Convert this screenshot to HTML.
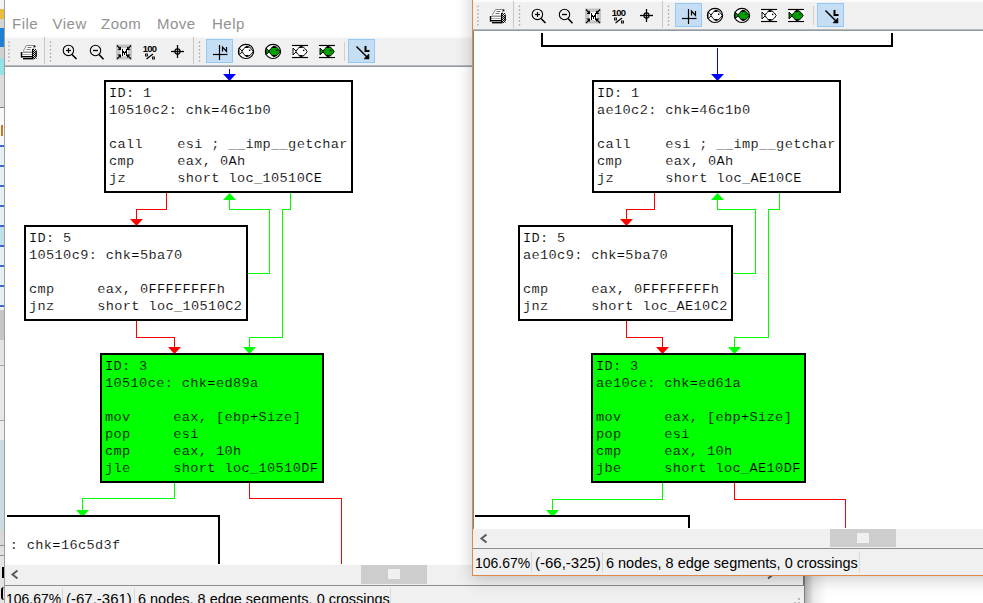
<!DOCTYPE html>
<html><head><meta charset="utf-8"><style>
*{margin:0;padding:0;box-sizing:border-box}
html,body{width:983px;height:603px;overflow:hidden;background:#fff}
body{position:relative}
.abs{position:absolute}
.node{position:absolute;border:2px solid #000;overflow:hidden}
.txt{position:absolute;font-family:"Liberation Mono", monospace;font-size:13.6px;letter-spacing:0.372px;line-height:17px;color:#000;white-space:pre}
.ln{height:17px}
.menu{position:absolute;font-family:"Liberation Sans", sans-serif;font-size:15px;letter-spacing:0.5px;color:#929292;top:15px;line-height:17px}
.stat{position:absolute;font-family:"Liberation Sans", sans-serif;font-size:15px;color:#000;white-space:nowrap;line-height:17px}
.canvas{position:absolute;overflow:hidden;background:#fff}
svg{position:absolute;left:0;top:0;overflow:visible}
</style></head><body>

<div class="abs" style="left:0;top:0px;width:4px;height:9px;background:#f4f4f4"></div>
<div class="abs" style="left:0;top:9px;width:4px;height:10px;background:#e6be3c"></div>
<div class="abs" style="left:0;top:19px;width:4px;height:9px;background:#d4d4d4"></div>
<div class="abs" style="left:0;top:28px;width:4px;height:19px;background:#1f7fd2"></div>
<div class="abs" style="left:0;top:47px;width:4px;height:11px;background:#d0d0d0"></div>
<div class="abs" style="left:0;top:58px;width:4px;height:17px;background:#92e2e8"></div>
<div class="abs" style="left:0;top:75px;width:4px;height:32px;background:#dcdcdc"></div>
<div class="abs" style="left:0;top:107px;width:4px;height:1px;background:#808080"></div>
<div class="abs" style="left:0;top:108px;width:4px;height:37px;background:#f8f8f8"></div>
<div class="abs" style="left:0;top:145px;width:4px;height:2px;background:#3a6ad0"></div>
<div class="abs" style="left:0;top:147px;width:4px;height:18px;background:#e4f0f2"></div>
<div class="abs" style="left:0;top:165px;width:4px;height:2px;background:#3a6ad0"></div>
<div class="abs" style="left:0;top:167px;width:4px;height:18px;background:#e4f0f2"></div>
<div class="abs" style="left:0;top:185px;width:4px;height:2px;background:#3a6ad0"></div>
<div class="abs" style="left:0;top:187px;width:4px;height:18px;background:#e4f0f2"></div>
<div class="abs" style="left:0;top:205px;width:4px;height:2px;background:#3a6ad0"></div>
<div class="abs" style="left:0;top:207px;width:4px;height:18px;background:#e4f0f2"></div>
<div class="abs" style="left:0;top:225px;width:4px;height:2px;background:#3a6ad0"></div>
<div class="abs" style="left:0;top:227px;width:4px;height:18px;background:#bfe0ea"></div>
<div class="abs" style="left:0;top:245px;width:4px;height:2px;background:#3a6ad0"></div>
<div class="abs" style="left:0;top:247px;width:4px;height:18px;background:#e4f0f2"></div>
<div class="abs" style="left:0;top:265px;width:4px;height:2px;background:#3a6ad0"></div>
<div class="abs" style="left:0;top:267px;width:4px;height:18px;background:#e4f0f2"></div>
<div class="abs" style="left:0;top:285px;width:4px;height:2px;background:#3a6ad0"></div>
<div class="abs" style="left:0;top:287px;width:4px;height:18px;background:#e4f0f2"></div>
<div class="abs" style="left:0;top:305px;width:4px;height:2px;background:#3a6ad0"></div>
<div class="abs" style="left:0;top:307px;width:4px;height:18px;background:#e4f0f2"></div>
<div class="abs" style="left:0;top:310px;width:4px;height:30px;background:#c6c6c6"></div>
<div class="abs" style="left:0;top:340px;width:4px;height:25px;background:#e4e4e4"></div>
<div class="abs" style="left:0;top:365px;width:4px;height:1px;background:#a8a8a8"></div>
<div class="abs" style="left:0;top:366px;width:4px;height:54px;background:#e8e8e8"></div>
<div class="abs" style="left:0;top:420px;width:4px;height:1px;background:#a8a8a8"></div>
<div class="abs" style="left:0;top:421px;width:4px;height:19px;background:#ececec"></div>
<div class="abs" style="left:0;top:440px;width:4px;height:90px;background:#c8dce2"></div>
<div class="abs" style="left:0;top:530px;width:4px;height:15px;background:#d8d8d8"></div>
<div class="abs" style="left:0;top:545px;width:4px;height:1px;background:#909090"></div>
<div class="abs" style="left:0;top:546px;width:4px;height:9px;background:#e0e0e0"></div>
<div class="abs" style="left:0;top:555px;width:4px;height:1px;background:#909090"></div>
<div class="abs" style="left:0;top:556px;width:4px;height:47px;background:#e4e4e4"></div>
<div class="abs" style="left:0;top:125px;width:3px;height:11px;border-right:2px solid #c87820"></div>
<div class="abs" style="left:0;top:567px;width:4px;height:11px;border-right:2px solid #000"></div>
<div class="abs" style="left:1px;top:587px;width:3px;height:13px;border-left:2px solid #000;border-radius:3px 0 0 3px"></div>
<div class="abs" style="left:805px;top:576px;width:22px;height:27px;background:linear-gradient(to right, rgba(0,0,0,0.3), rgba(0,0,0,0.08) 40%, rgba(0,0,0,0))"></div>
<div class="abs" style="left:4px;top:0;width:801px;height:603px;background:#fff;border-left:1px solid #a0a0a0;border-right:1px solid #7a7e84"></div>
<div class="menu" style="left:12px">File</div>
<div class="menu" style="left:52.5px">View</div>
<div class="menu" style="left:101px">Zoom</div>
<div class="menu" style="left:157px">Move</div>
<div class="menu" style="left:212px">Help</div>
<div class="abs" style="left:5px;top:36px;width:799px;height:29px;background:#f0f0f0;border-top:2px solid #fbfbfb"></div>
<div class="abs" style="left:5px;top:65px;width:799px;height:2px;background:linear-gradient(#c4c8cc,#868c94)"></div>
<svg width="983" height="603" style="left:0;top:0"><defs><pattern id="dith" width="2" height="2" patternUnits="userSpaceOnUse"><rect width="1" height="1" fill="#000"/><rect x="1" y="1" width="1" height="1" fill="#000"/></pattern></defs><g transform="translate(0,0)">
 <path d="M26.5 45.5 L34.5 45.5 L32 51.5 L23 51.5 Z" fill="#fff" stroke="#888" stroke-width="1"/>
 <line x1="27.5" y1="47.5" x2="31.5" y2="47.5" stroke="#777" stroke-width="1"/>
 <line x1="26.5" y1="49.5" x2="30.5" y2="49.5" stroke="#777" stroke-width="1"/>
 <rect x="33.8" y="45.6" width="1.6" height="1.6" fill="#000"/>
 <rect x="21" y="51.5" width="12" height="6" fill="#fff"/>
 <line x1="21" y1="52.5" x2="33" y2="52.5" stroke="#999" stroke-width="1"/>
 <line x1="22" y1="54.5" x2="33" y2="54.5" stroke="#aaa" stroke-width="1"/>
 <rect x="20.8" y="52" width="1.4" height="5.5" fill="#000"/>
 <rect x="21" y="56" width="12" height="1.4" fill="#000"/>
 <rect x="23" y="58" width="10.5" height="1.4" fill="#000"/>
 <rect x="32" y="49" width="4.5" height="10" fill="url(#dith)"/>
 <rect x="32" y="49" width="1.2" height="10" fill="#000"/>
 <rect x="35.6" y="51" width="1.2" height="6" fill="#000"/>
 <circle cx="68.4" cy="50.4" r="5.2" fill="none" stroke="#000" stroke-width="1.1"/>
 <line x1="66" y1="50.5" x2="71" y2="50.5" stroke="#000" stroke-width="1.2"/>
 <line x1="68.5" y1="48" x2="68.5" y2="53" stroke="#000" stroke-width="1.2"/>
 <line x1="72" y1="54.5" x2="76.5" y2="59" stroke="#000" stroke-width="1.6"/>
 <circle cx="95.5" cy="50.5" r="5.2" fill="none" stroke="#000" stroke-width="1.1"/>
 <line x1="93" y1="50.5" x2="98" y2="50.5" stroke="#000" stroke-width="1.3"/>
 <line x1="99" y1="54.5" x2="103.5" y2="59.2" stroke="#000" stroke-width="1.6"/>
 <rect x="116" y="44.5" width="16" height="15" fill="#c4c4c4"/>
 <rect x="120.5" y="48.3" width="7.5" height="8" fill="#fff"/>
 <path d="M117 45.5 L120 48.5 M131 45.5 L128 48.5 M117 59 L120 56 M131 59 L128 56" stroke="#000" stroke-width="1.2"/>
 <path d="M117.5 50 L121 50 L121 46.5 Z M130.5 50 L127 50 L127 46.5 Z M117.5 54.5 L121 54.5 L121 58 Z M130.5 54.5 L127 54.5 L127 58 Z" fill="#000"/>
 <path d="M122.5 55.5 L122.5 50.5 L124.5 53.5 L126.5 50.5 L126.5 55.5" fill="none" stroke="#000" stroke-width="1.15" shape-rendering="crispEdges"/>
 <text x="149.5" y="51.8" font-family="Liberation Sans" font-size="9.2" font-weight="bold" text-anchor="middle" fill="#000" letter-spacing="-0.7" textLength="13.5" lengthAdjust="spacingAndGlyphs">100</text>
 <line x1="146.5" y1="59" x2="153" y2="54" stroke="#000" stroke-width="1.2"/>
 <rect x="145.5" y="54" width="2" height="2" fill="none" stroke="#000" stroke-width="0.9"/>
 <rect x="152.5" y="57" width="2" height="2" fill="none" stroke="#000" stroke-width="0.9"/>
 <line x1="171" y1="51.5" x2="184" y2="51.5" stroke="#000" stroke-width="1.3"/>
 <line x1="177.5" y1="45" x2="177.5" y2="58" stroke="#000" stroke-width="1.3"/>
 <circle cx="177.5" cy="51.5" r="2.6" fill="none" stroke="#000" stroke-width="1.1"/>
 <rect x="206.5" y="39.5" width="26" height="23" fill="#c6def3" stroke="#93c9f5" stroke-width="1"/>
 <line x1="219.5" y1="45" x2="219.5" y2="60" stroke="#000" stroke-width="1.2"/>
 <line x1="213" y1="54.5" x2="227.5" y2="54.5" stroke="#000" stroke-width="1.2"/>
 <path d="M222.5 51.5 L222.5 47 L226.5 51.5 L226.5 47" fill="none" stroke="#000" stroke-width="1.2"/>

 <ellipse cx="246" cy="51.4" rx="7.6" ry="7.1" fill="#fff" stroke="#000" stroke-width="1.2"/>
 <path d="M239 47.9 L242.5 51.4 L239 54.9 Z" fill="#fff" stroke="#000" stroke-width="1"/><path d="M242 51.4 Q245 45.4 249 46.8 L251.5 48.9 L253.2 51.4 L251.5 53.9 L249 56.0 Q245 57.4 242 51.4 Z" fill="#fff" stroke="#000" stroke-width="1"/><path d="M244.5 47.9 L246.8 45.6 L249 47.9 Z M244.5 54.9 L246.8 57.199999999999996 L249 54.9 Z" fill="#000"/><rect x="249" y="49.6" width="1.4" height="1.4" fill="#000"/>
 <ellipse cx="273" cy="51.4" rx="7.6" ry="7.1" fill="#fff" stroke="#000" stroke-width="1.2"/>
 <path d="M266 47.9 L269.5 51.4 L266 54.9 Z" fill="#00a000" stroke="#000" stroke-width="1"/><path d="M269 51.4 Q272 45.4 276 46.8 L278.5 48.9 L280.2 51.4 L278.5 53.9 L276 56.0 Q272 57.4 269 51.4 Z" fill="#00a000" stroke="#000" stroke-width="1"/><path d="M271.5 47.9 L273.8 45.6 L276 47.9 Z M271.5 54.9 L273.8 57.199999999999996 L276 54.9 Z" fill="#000"/><rect x="276" y="49.6" width="1.4" height="1.4" fill="#000"/>
 <rect x="292" y="45" width="16" height="13" fill="#fff"/>
 <line x1="292" y1="45.5" x2="308" y2="45.5" stroke="#000" stroke-width="1.2"/>
 <line x1="292" y1="57.5" x2="308" y2="57.5" stroke="#000" stroke-width="1.2"/>
 <path d="M293 48.0 L296.5 51.5 L293 55.0 Z" fill="#fff" stroke="#000" stroke-width="1"/><path d="M296 51.5 Q299 45.5 303 46.9 L305.5 49.0 L307.2 51.5 L305.5 54.0 L303 56.1 Q299 57.5 296 51.5 Z" fill="#fff" stroke="#000" stroke-width="1"/><path d="M298.5 48.0 L300.8 45.7 L303 48.0 Z M298.5 55.0 L300.8 57.3 L303 55.0 Z" fill="#000"/><rect x="303" y="49.7" width="1.4" height="1.4" fill="#000"/>
 <rect x="319" y="45" width="16" height="13" fill="#fff"/>
 <line x1="319" y1="45.5" x2="335" y2="45.5" stroke="#000" stroke-width="1.2"/>
 <line x1="319" y1="57.5" x2="335" y2="57.5" stroke="#000" stroke-width="1.2"/>
 <path d="M320 48.0 L323.5 51.5 L320 55.0 Z" fill="#00a000" stroke="#000" stroke-width="1"/><path d="M323 51.5 Q326 45.5 330 46.9 L332.5 49.0 L334.2 51.5 L332.5 54.0 L330 56.1 Q326 57.5 323 51.5 Z" fill="#00a000" stroke="#000" stroke-width="1"/><path d="M325.5 48.0 L327.8 45.7 L330 48.0 Z M325.5 55.0 L327.8 57.3 L330 55.0 Z" fill="#000"/><rect x="330" y="49.7" width="1.4" height="1.4" fill="#000"/>
 <line x1="344.5" y1="42" x2="344.5" y2="61" stroke="#d0d0d0" stroke-width="1"/>
 <rect x="348.5" y="39.5" width="26" height="23" fill="#c6def3" stroke="#93c9f5" stroke-width="1"/>
 <line x1="356.5" y1="46.5" x2="367" y2="57" stroke="#000" stroke-width="1.5"/>
 <path d="M369 59 L364 58.8 L368.8 54 Z" fill="#000" stroke="#000" stroke-width="0.6"/>
 <path d="M365.5 46 L365.5 51 L369.5 51" fill="none" stroke="#000" stroke-width="2"/>
<line x1="8.4" y1="42.9" x2="9.6" y2="41.7" stroke="#a0a0a0" stroke-width="1.1"/><line x1="8.4" y1="46.6" x2="9.6" y2="45.400000000000006" stroke="#a0a0a0" stroke-width="1.1"/><line x1="8.4" y1="50.3" x2="9.6" y2="49.1" stroke="#a0a0a0" stroke-width="1.1"/><line x1="8.4" y1="54.0" x2="9.6" y2="52.800000000000004" stroke="#a0a0a0" stroke-width="1.1"/><line x1="8.4" y1="57.699999999999996" x2="9.6" y2="56.5" stroke="#a0a0a0" stroke-width="1.1"/><line x1="8.4" y1="61.4" x2="9.6" y2="60.2" stroke="#a0a0a0" stroke-width="1.1"/><line x1="49.9" y1="42.9" x2="51.1" y2="41.7" stroke="#a0a0a0" stroke-width="1.1"/><line x1="49.9" y1="46.6" x2="51.1" y2="45.400000000000006" stroke="#a0a0a0" stroke-width="1.1"/><line x1="49.9" y1="50.3" x2="51.1" y2="49.1" stroke="#a0a0a0" stroke-width="1.1"/><line x1="49.9" y1="54.0" x2="51.1" y2="52.800000000000004" stroke="#a0a0a0" stroke-width="1.1"/><line x1="49.9" y1="57.699999999999996" x2="51.1" y2="56.5" stroke="#a0a0a0" stroke-width="1.1"/><line x1="49.9" y1="61.4" x2="51.1" y2="60.2" stroke="#a0a0a0" stroke-width="1.1"/><line x1="198.9" y1="42.9" x2="200.1" y2="41.7" stroke="#a0a0a0" stroke-width="1.1"/><line x1="198.9" y1="46.6" x2="200.1" y2="45.400000000000006" stroke="#a0a0a0" stroke-width="1.1"/><line x1="198.9" y1="50.3" x2="200.1" y2="49.1" stroke="#a0a0a0" stroke-width="1.1"/><line x1="198.9" y1="54.0" x2="200.1" y2="52.800000000000004" stroke="#a0a0a0" stroke-width="1.1"/><line x1="198.9" y1="57.699999999999996" x2="200.1" y2="56.5" stroke="#a0a0a0" stroke-width="1.1"/><line x1="198.9" y1="61.4" x2="200.1" y2="60.2" stroke="#a0a0a0" stroke-width="1.1"/><line x1="44.5" y1="37" x2="44.5" y2="64" stroke="#c8c8c8" stroke-width="1"/><line x1="193.5" y1="37" x2="193.5" y2="64" stroke="#c8c8c8" stroke-width="1"/></g></svg>
<div class="canvas" style="left:7px;top:69px;width:465px;height:495px">
<div class="abs" style="left:-7px;top:-69px;width:983px;height:603px">
<svg width="983" height="603"><polyline points="229.5,60 229.5,75" fill="none" stroke="#0000ff" stroke-width="1" shape-rendering="crispEdges"/><path d="M223.0 74 L236.0 74 L229.5 81 Z" fill="#0000ff"/><polyline points="166.5,193 166.5,209.5 136.5,209.5 136.5,219" fill="none" stroke="#ff0000" stroke-width="1" shape-rendering="crispEdges"/><path d="M130.0 219 L143.0 219 L136.5 226 Z" fill="#ff0000"/><polyline points="247,273.5 269.5,273.5 269.5,209.5 229.5,209.5 229.5,199" fill="none" stroke="#00ff00" stroke-width="1" shape-rendering="crispEdges"/><path d="M223.0 200 L236.0 200 L229.5 193 Z" fill="#00ff00"/><polyline points="290.5,193 290.5,209.5 282.5,209.5 282.5,337.5 249.5,337.5 249.5,347" fill="none" stroke="#00ff00" stroke-width="1" shape-rendering="crispEdges"/><path d="M243.0 347 L256.0 347 L249.5 354 Z" fill="#00ff00"/><polyline points="136.5,321 136.5,337.5 174.5,337.5 174.5,347" fill="none" stroke="#ff0000" stroke-width="1" shape-rendering="crispEdges"/><path d="M168.0 347 L181.0 347 L174.5 354 Z" fill="#ff0000"/><polyline points="174.5,483 174.5,498.5 82.5,498.5 82.5,510" fill="none" stroke="#00ff00" stroke-width="1" shape-rendering="crispEdges"/><path d="M76.0 510 L89.0 510 L82.5 517 Z" fill="#00ff00"/><polyline points="249.5,483 249.5,498.5 341.5,498.5 341.5,600" fill="none" stroke="#ff0000" stroke-width="1" shape-rendering="crispEdges"/></svg>
<div class="node" style="left:104px;top:80px;width:249px;height:113px;background:#fff"><div class="txt" style="left:3px;top:3px;-webkit-text-stroke:0.15px #fff"><div class="ln">ID: 1</div><div class="ln">10510c2: chk=46c1b0</div><div class="ln">&#160;</div><div class="ln">call    esi ; __imp__getchar</div><div class="ln">cmp     eax, 0Ah</div><div class="ln">jz      short loc_10510CE</div></div></div>
<div class="node" style="left:24px;top:225px;width:224px;height:96px;background:#fff"><div class="txt" style="left:3px;top:3px;-webkit-text-stroke:0.15px #fff"><div class="ln">ID: 5</div><div class="ln">10510c9: chk=5ba70</div><div class="ln">&#160;</div><div class="ln">cmp     eax, 0FFFFFFFFh</div><div class="ln">jnz     short loc_10510C2</div></div></div>
<div class="node" style="left:100px;top:353px;width:224px;height:130px;background:#00ff00"><div class="txt" style="left:3px;top:3px;-webkit-text-stroke:0.15px #00ff00"><div class="ln">ID: 3</div><div class="ln">10510ce: chk=ed89a</div><div class="ln">&#160;</div><div class="ln">mov     eax, [ebp+Size]</div><div class="ln">pop     esi</div><div class="ln">cmp     eax, 10h</div><div class="ln">jle     short loc_10510DF</div></div></div>
<div class="node" style="left:-55px;top:515px;width:275px;height:120px;background:#fff"><div class="txt" style="left:3px;top:3px;-webkit-text-stroke:0.15px #fff"><div class="ln">&#160;</div><div class="ln">       : chk=16c5d3f</div></div></div>
</div></div>
<div class="abs" style="left:5px;top:565px;width:799px;height:20px;background:#f0f0f0"></div>
<svg width="983" height="603"><path d="M17.5 570.5 L12.5 574.5 L17.5 578.5" fill="none" stroke="#5a5a5a" stroke-width="2"/><path d="M768 570.5 L773 574.5 L768 578.5" fill="none" stroke="#5a5a5a" stroke-width="2"/></svg>
<div class="abs" style="left:361px;top:565px;width:66px;height:19px;background:#cdcdcd"></div>
<div class="abs" style="left:388px;top:569px;width:12px;height:10px;background:#f0f0f0"></div>
<div class="abs" style="left:5px;top:585px;width:799px;height:1px;background:#8a8e94"></div>
<div class="abs" style="left:5px;top:586px;width:799px;height:17px;background:#f0f0f0"></div>
<div class="stat" style="left:5.5px;top:590px;transform:scaleX(0.93);transform-origin:0 0">106.67%</div>
<div class="stat" style="left:66px;top:590px;transform:scaleX(1.0);transform-origin:0 0">(-67,-361)</div>
<div class="stat" style="left:137.5px;top:590px;transform:scaleX(0.965);transform-origin:0 0">6 nodes, 8 edge segments, 0 crossings</div>
<div class="abs" style="left:803px;top:576px;width:1px;height:9px;background:#70747a"></div>
<div class="abs" style="left:798px;top:598px;width:2px;height:2px;background:#b8b8b8"></div>
<div class="abs" style="left:798px;top:602px;width:2px;height:2px;background:#b8b8b8"></div>
<div class="abs" style="left:794px;top:602px;width:2px;height:2px;background:#b8b8b8"></div>
<div class="abs" style="left:62px;top:588px;width:1px;height:20px;background:#dadada"></div>
<div class="abs" style="left:134px;top:588px;width:1px;height:20px;background:#dadada"></div>
<div class="abs" style="left:390px;top:588px;width:1px;height:20px;background:#dadada"></div>
<div class="abs" style="left:472px;top:-20px;width:540px;height:596px;background:#f0f0f0;border-left:1px solid #e08a4a;border-bottom:1px solid #e08a4a;box-shadow:0 3px 16px rgba(0,0,0,0.22)"></div>
<div class="abs" style="left:473px;top:0;width:510px;height:29px;background:#f0f0f0;border-top:2px solid #fbfbfb"></div>
<div class="abs" style="left:473px;top:29px;width:510px;height:2px;background:linear-gradient(#c4c8cc,#868c94)"></div>
<svg width="983" height="603"><g transform="translate(469,-36)">
 <path d="M26.5 45.5 L34.5 45.5 L32 51.5 L23 51.5 Z" fill="#fff" stroke="#888" stroke-width="1"/>
 <line x1="27.5" y1="47.5" x2="31.5" y2="47.5" stroke="#777" stroke-width="1"/>
 <line x1="26.5" y1="49.5" x2="30.5" y2="49.5" stroke="#777" stroke-width="1"/>
 <rect x="33.8" y="45.6" width="1.6" height="1.6" fill="#000"/>
 <rect x="21" y="51.5" width="12" height="6" fill="#fff"/>
 <line x1="21" y1="52.5" x2="33" y2="52.5" stroke="#999" stroke-width="1"/>
 <line x1="22" y1="54.5" x2="33" y2="54.5" stroke="#aaa" stroke-width="1"/>
 <rect x="20.8" y="52" width="1.4" height="5.5" fill="#000"/>
 <rect x="21" y="56" width="12" height="1.4" fill="#000"/>
 <rect x="23" y="58" width="10.5" height="1.4" fill="#000"/>
 <rect x="32" y="49" width="4.5" height="10" fill="url(#dith)"/>
 <rect x="32" y="49" width="1.2" height="10" fill="#000"/>
 <rect x="35.6" y="51" width="1.2" height="6" fill="#000"/>
 <circle cx="68.4" cy="50.4" r="5.2" fill="none" stroke="#000" stroke-width="1.1"/>
 <line x1="66" y1="50.5" x2="71" y2="50.5" stroke="#000" stroke-width="1.2"/>
 <line x1="68.5" y1="48" x2="68.5" y2="53" stroke="#000" stroke-width="1.2"/>
 <line x1="72" y1="54.5" x2="76.5" y2="59" stroke="#000" stroke-width="1.6"/>
 <circle cx="95.5" cy="50.5" r="5.2" fill="none" stroke="#000" stroke-width="1.1"/>
 <line x1="93" y1="50.5" x2="98" y2="50.5" stroke="#000" stroke-width="1.3"/>
 <line x1="99" y1="54.5" x2="103.5" y2="59.2" stroke="#000" stroke-width="1.6"/>
 <rect x="116" y="44.5" width="16" height="15" fill="#c4c4c4"/>
 <rect x="120.5" y="48.3" width="7.5" height="8" fill="#fff"/>
 <path d="M117 45.5 L120 48.5 M131 45.5 L128 48.5 M117 59 L120 56 M131 59 L128 56" stroke="#000" stroke-width="1.2"/>
 <path d="M117.5 50 L121 50 L121 46.5 Z M130.5 50 L127 50 L127 46.5 Z M117.5 54.5 L121 54.5 L121 58 Z M130.5 54.5 L127 54.5 L127 58 Z" fill="#000"/>
 <path d="M122.5 55.5 L122.5 50.5 L124.5 53.5 L126.5 50.5 L126.5 55.5" fill="none" stroke="#000" stroke-width="1.15" shape-rendering="crispEdges"/>
 <text x="149.5" y="51.8" font-family="Liberation Sans" font-size="9.2" font-weight="bold" text-anchor="middle" fill="#000" letter-spacing="-0.7" textLength="13.5" lengthAdjust="spacingAndGlyphs">100</text>
 <line x1="146.5" y1="59" x2="153" y2="54" stroke="#000" stroke-width="1.2"/>
 <rect x="145.5" y="54" width="2" height="2" fill="none" stroke="#000" stroke-width="0.9"/>
 <rect x="152.5" y="57" width="2" height="2" fill="none" stroke="#000" stroke-width="0.9"/>
 <line x1="171" y1="51.5" x2="184" y2="51.5" stroke="#000" stroke-width="1.3"/>
 <line x1="177.5" y1="45" x2="177.5" y2="58" stroke="#000" stroke-width="1.3"/>
 <circle cx="177.5" cy="51.5" r="2.6" fill="none" stroke="#000" stroke-width="1.1"/>
 <rect x="206.5" y="39.5" width="26" height="23" fill="#c6def3" stroke="#93c9f5" stroke-width="1"/>
 <line x1="219.5" y1="45" x2="219.5" y2="60" stroke="#000" stroke-width="1.2"/>
 <line x1="213" y1="54.5" x2="227.5" y2="54.5" stroke="#000" stroke-width="1.2"/>
 <path d="M222.5 51.5 L222.5 47 L226.5 51.5 L226.5 47" fill="none" stroke="#000" stroke-width="1.2"/>

 <ellipse cx="246" cy="51.4" rx="7.6" ry="7.1" fill="#fff" stroke="#000" stroke-width="1.2"/>
 <path d="M239 47.9 L242.5 51.4 L239 54.9 Z" fill="#fff" stroke="#000" stroke-width="1"/><path d="M242 51.4 Q245 45.4 249 46.8 L251.5 48.9 L253.2 51.4 L251.5 53.9 L249 56.0 Q245 57.4 242 51.4 Z" fill="#fff" stroke="#000" stroke-width="1"/><path d="M244.5 47.9 L246.8 45.6 L249 47.9 Z M244.5 54.9 L246.8 57.199999999999996 L249 54.9 Z" fill="#000"/><rect x="249" y="49.6" width="1.4" height="1.4" fill="#000"/>
 <ellipse cx="273" cy="51.4" rx="7.6" ry="7.1" fill="#fff" stroke="#000" stroke-width="1.2"/>
 <path d="M266 47.9 L269.5 51.4 L266 54.9 Z" fill="#00a000" stroke="#000" stroke-width="1"/><path d="M269 51.4 Q272 45.4 276 46.8 L278.5 48.9 L280.2 51.4 L278.5 53.9 L276 56.0 Q272 57.4 269 51.4 Z" fill="#00a000" stroke="#000" stroke-width="1"/><path d="M271.5 47.9 L273.8 45.6 L276 47.9 Z M271.5 54.9 L273.8 57.199999999999996 L276 54.9 Z" fill="#000"/><rect x="276" y="49.6" width="1.4" height="1.4" fill="#000"/>
 <rect x="292" y="45" width="16" height="13" fill="#fff"/>
 <line x1="292" y1="45.5" x2="308" y2="45.5" stroke="#000" stroke-width="1.2"/>
 <line x1="292" y1="57.5" x2="308" y2="57.5" stroke="#000" stroke-width="1.2"/>
 <path d="M293 48.0 L296.5 51.5 L293 55.0 Z" fill="#fff" stroke="#000" stroke-width="1"/><path d="M296 51.5 Q299 45.5 303 46.9 L305.5 49.0 L307.2 51.5 L305.5 54.0 L303 56.1 Q299 57.5 296 51.5 Z" fill="#fff" stroke="#000" stroke-width="1"/><path d="M298.5 48.0 L300.8 45.7 L303 48.0 Z M298.5 55.0 L300.8 57.3 L303 55.0 Z" fill="#000"/><rect x="303" y="49.7" width="1.4" height="1.4" fill="#000"/>
 <rect x="319" y="45" width="16" height="13" fill="#fff"/>
 <line x1="319" y1="45.5" x2="335" y2="45.5" stroke="#000" stroke-width="1.2"/>
 <line x1="319" y1="57.5" x2="335" y2="57.5" stroke="#000" stroke-width="1.2"/>
 <path d="M320 48.0 L323.5 51.5 L320 55.0 Z" fill="#00a000" stroke="#000" stroke-width="1"/><path d="M323 51.5 Q326 45.5 330 46.9 L332.5 49.0 L334.2 51.5 L332.5 54.0 L330 56.1 Q326 57.5 323 51.5 Z" fill="#00a000" stroke="#000" stroke-width="1"/><path d="M325.5 48.0 L327.8 45.7 L330 48.0 Z M325.5 55.0 L327.8 57.3 L330 55.0 Z" fill="#000"/><rect x="330" y="49.7" width="1.4" height="1.4" fill="#000"/>
 <line x1="344.5" y1="42" x2="344.5" y2="61" stroke="#d0d0d0" stroke-width="1"/>
 <rect x="348.5" y="39.5" width="26" height="23" fill="#c6def3" stroke="#93c9f5" stroke-width="1"/>
 <line x1="356.5" y1="46.5" x2="367" y2="57" stroke="#000" stroke-width="1.5"/>
 <path d="M369 59 L364 58.8 L368.8 54 Z" fill="#000" stroke="#000" stroke-width="0.6"/>
 <path d="M365.5 46 L365.5 51 L369.5 51" fill="none" stroke="#000" stroke-width="2"/>
<line x1="8.4" y1="42.9" x2="9.6" y2="41.7" stroke="#a0a0a0" stroke-width="1.1"/><line x1="8.4" y1="46.6" x2="9.6" y2="45.400000000000006" stroke="#a0a0a0" stroke-width="1.1"/><line x1="8.4" y1="50.3" x2="9.6" y2="49.1" stroke="#a0a0a0" stroke-width="1.1"/><line x1="8.4" y1="54.0" x2="9.6" y2="52.800000000000004" stroke="#a0a0a0" stroke-width="1.1"/><line x1="8.4" y1="57.699999999999996" x2="9.6" y2="56.5" stroke="#a0a0a0" stroke-width="1.1"/><line x1="8.4" y1="61.4" x2="9.6" y2="60.2" stroke="#a0a0a0" stroke-width="1.1"/><line x1="49.9" y1="42.9" x2="51.1" y2="41.7" stroke="#a0a0a0" stroke-width="1.1"/><line x1="49.9" y1="46.6" x2="51.1" y2="45.400000000000006" stroke="#a0a0a0" stroke-width="1.1"/><line x1="49.9" y1="50.3" x2="51.1" y2="49.1" stroke="#a0a0a0" stroke-width="1.1"/><line x1="49.9" y1="54.0" x2="51.1" y2="52.800000000000004" stroke="#a0a0a0" stroke-width="1.1"/><line x1="49.9" y1="57.699999999999996" x2="51.1" y2="56.5" stroke="#a0a0a0" stroke-width="1.1"/><line x1="49.9" y1="61.4" x2="51.1" y2="60.2" stroke="#a0a0a0" stroke-width="1.1"/><line x1="198.9" y1="42.9" x2="200.1" y2="41.7" stroke="#a0a0a0" stroke-width="1.1"/><line x1="198.9" y1="46.6" x2="200.1" y2="45.400000000000006" stroke="#a0a0a0" stroke-width="1.1"/><line x1="198.9" y1="50.3" x2="200.1" y2="49.1" stroke="#a0a0a0" stroke-width="1.1"/><line x1="198.9" y1="54.0" x2="200.1" y2="52.800000000000004" stroke="#a0a0a0" stroke-width="1.1"/><line x1="198.9" y1="57.699999999999996" x2="200.1" y2="56.5" stroke="#a0a0a0" stroke-width="1.1"/><line x1="198.9" y1="61.4" x2="200.1" y2="60.2" stroke="#a0a0a0" stroke-width="1.1"/><line x1="44.5" y1="37" x2="44.5" y2="64" stroke="#c8c8c8" stroke-width="1"/><line x1="193.5" y1="37" x2="193.5" y2="64" stroke="#c8c8c8" stroke-width="1"/></g></svg>
<div class="abs" style="left:473px;top:31px;width:510px;height:498px;background:#fff;border-left:1px solid #7c848c"></div>
<div class="canvas" style="left:475px;top:33px;width:508px;height:495px">
<div class="abs" style="left:-475px;top:-33px;width:983px;height:603px">
<svg width="983" height="603"><polyline points="542,20 542,46 892,46 892,20" fill="none" stroke="#000" stroke-width="2" shape-rendering="crispEdges"/><polyline points="717.5,48 717.5,75" fill="none" stroke="#0000ff" stroke-width="1" shape-rendering="crispEdges"/><path d="M711.0 74 L724.0 74 L717.5 81 Z" fill="#0000ff"/><polyline points="654.5,193 654.5,209.5 626.5,209.5 626.5,219" fill="none" stroke="#ff0000" stroke-width="1" shape-rendering="crispEdges"/><path d="M620.0 219 L633.0 219 L626.5 226 Z" fill="#ff0000"/><polyline points="733,273.5 755.5,273.5 755.5,209.5 717.5,209.5 717.5,199" fill="none" stroke="#00ff00" stroke-width="1" shape-rendering="crispEdges"/><path d="M711.0 200 L724.0 200 L717.5 193 Z" fill="#00ff00"/><polyline points="779.5,193 779.5,209.5 768.5,209.5 768.5,337.5 734.5,337.5 734.5,347" fill="none" stroke="#00ff00" stroke-width="1" shape-rendering="crispEdges"/><path d="M728.0 347 L741.0 347 L734.5 354 Z" fill="#00ff00"/><polyline points="626.5,321 626.5,337.5 662.5,337.5 662.5,347" fill="none" stroke="#ff0000" stroke-width="1" shape-rendering="crispEdges"/><path d="M656.0 347 L669.0 347 L662.5 354 Z" fill="#ff0000"/><polyline points="662.5,483 662.5,499.5 552.5,499.5 552.5,510" fill="none" stroke="#00ff00" stroke-width="1" shape-rendering="crispEdges"/><path d="M546.0 510 L559.0 510 L552.5 517 Z" fill="#00ff00"/><polyline points="734.5,483 734.5,499.5 845.5,499.5 845.5,600" fill="none" stroke="#ff0000" stroke-width="1" shape-rendering="crispEdges"/></svg>
<div class="node" style="left:592px;top:80px;width:249px;height:113px;background:#fff"><div class="txt" style="left:3px;top:3px;-webkit-text-stroke:0.15px #fff"><div class="ln">ID: 1</div><div class="ln">ae10c2: chk=46c1b0</div><div class="ln">&#160;</div><div class="ln">call    esi ; __imp__getchar</div><div class="ln">cmp     eax, 0Ah</div><div class="ln">jz      short loc_AE10CE</div></div></div>
<div class="node" style="left:518px;top:225px;width:215px;height:96px;background:#fff"><div class="txt" style="left:3px;top:3px;-webkit-text-stroke:0.15px #fff"><div class="ln">ID: 5</div><div class="ln">ae10c9: chk=5ba70</div><div class="ln">&#160;</div><div class="ln">cmp     eax, 0FFFFFFFFh</div><div class="ln">jnz     short loc_AE10C2</div></div></div>
<div class="node" style="left:591px;top:353px;width:215px;height:130px;background:#00ff00"><div class="txt" style="left:3px;top:3px;-webkit-text-stroke:0.15px #00ff00"><div class="ln">ID: 3</div><div class="ln">ae10ce: chk=ed61a</div><div class="ln">&#160;</div><div class="ln">mov     eax, [ebp+Size]</div><div class="ln">pop     esi</div><div class="ln">cmp     eax, 10h</div><div class="ln">jbe     short loc_AE10DF</div></div></div>
<div class="node" style="left:420px;top:515px;width:270px;height:120px;background:#fff"><div class="txt" style="left:3px;top:3px;-webkit-text-stroke:0.15px #fff"><div class="ln">ID: 4</div><div class="ln">ae10df: chk=16c5d3f</div><div class="ln">&#160;</div><div class="ln">mov     eax</div></div></div>
</div></div>
<div class="abs" style="left:473px;top:529px;width:510px;height:19px;background:#f0f0f0"></div>
<svg width="983" height="603"><path d="M486.5 534.5 L481.5 538.5 L486.5 542.5" fill="none" stroke="#5a5a5a" stroke-width="2"/></svg>
<div class="abs" style="left:830px;top:529px;width:66px;height:18px;background:#cdcdcd"></div>
<div class="abs" style="left:857px;top:533px;width:12px;height:10px;background:#f0f0f0"></div>
<div class="abs" style="left:473px;top:548px;width:510px;height:1px;background:#8a8e94"></div>
<div class="stat" style="left:474.5px;top:554px;transform:scaleX(0.93);transform-origin:0 0">106.67%</div>
<div class="stat" style="left:535px;top:554px;transform:scaleX(1.0);transform-origin:0 0">(-66,-325)</div>
<div class="stat" style="left:605.5px;top:554px;transform:scaleX(0.965);transform-origin:0 0">6 nodes, 8 edge segments, 0 crossings</div>
<div class="abs" style="left:531px;top:552px;width:1px;height:21px;background:#dadada"></div>
<div class="abs" style="left:602px;top:552px;width:1px;height:21px;background:#dadada"></div>
<div class="abs" style="left:859px;top:552px;width:1px;height:21px;background:#dadada"></div>
</body></html>
